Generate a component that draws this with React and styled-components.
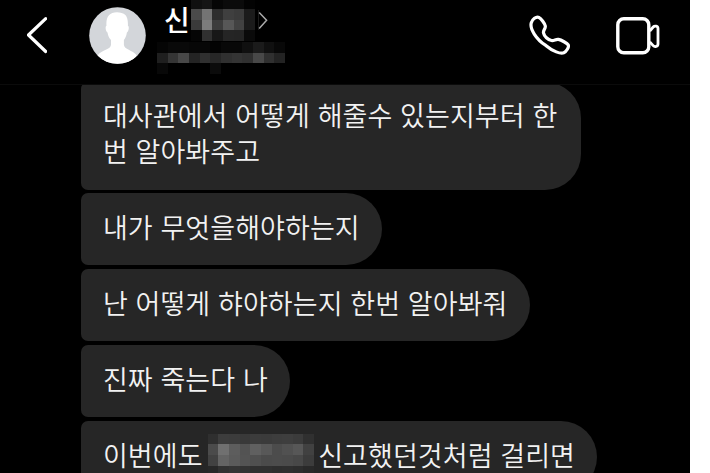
import React from "react";
import styled, { createGlobalStyle } from "styled-components";

const headMask = [
  ["#101010", "#151515", "#060606", "#0b0b0b", "#0b0b0b", "#030303"],
  ["#4a4a4a", "#747474", "#2d2d2d", "#3f3f3f", "#3b3b3b", "#1b1b1b"],
  ["#3a3a3a", "#7c7c7c", "#3c3c3c", "#575757", "#424242", "#1b1b1b"],
  ["#050505", "#303030", "#171717", "#252525", "#242424", "#0a0a0a"],
];

const subMask = [
  ["#050505", "#090909", "#090909", "#070707", "#070707", "#030303", "#080808", "#080808", "#101010", "#1b1b1b", "#101010", "#080808"],
  ["#1f1f1f", "#353535", "#484848", "#242424", "#303030", "#272727", "#303030", "#343434", "#303030", "#484848", "#303030", "#232323"],
  ["#080808", "#000", "#000", "#000", "#000", "#0b0b0b", "#000", "#000", "#000", "#000", "#000", "#000"],
];

const messageMask = [
  ["#2f2f2f", "#3d3d3d", "#3c3c3c", "#393939", "#3c3c3c", "#3b3b3b", "#3d3d3d", "#3e3e3e", "#3b3b3b", "#303030"],
  ["#4b4b4b", "#707070", "#5d5d5d", "#535353", "#606060", "#585858", "#4c4c4c", "#515151", "#575757", "#414141"],
  ["#424242", "#646464", "#5b5b5b", "#545454", "#505050", "#4b4b4b", "#4c4c4c", "#4b4b4b", "#484848", "#3c3c3c"],
  ["#282828", "#323232", "#353535", "#333333", "#303030", "#303030", "#2e2e2e", "#2f2f2f", "#2d2d2d", "#292929"],
];

const messages = [
  { id: 1, width: 500, lines: ["대사관에서 어떻게 해줄수 있는지부터 한", "번 알아봐주고"] },
  { id: 2, width: 301, lines: ["내가 무엇을해야하는지"] },
  { id: 3, width: 449, lines: ["난 어떻게 햐야하는지 한번 알아봐줘"] },
  { id: 4, width: 209, lines: ["진짜 죽는다 나"] },
];

const Mosaic = ({ rows, className }) => (
  <MosaicGrid className={className} $cols={rows[0].length}>
    {rows.map((row, y) => row.map((color, x) => (
      <MosaicCell key={`${y}-${x}`} $color={color} />
    )))}
  </MosaicGrid>
);

const BackIcon = () => (
  <svg width="20" height="37" viewBox="0 0 20 37" fill="none" stroke="#fff" strokeWidth="3.2" strokeLinecap="round" strokeLinejoin="round">
    <path d="M18.7 1.7 1.5 18 18.7 34.5" />
  </svg>
);

const Avatar = () => (
  <svg width="57" height="57" viewBox="0 0 57 57">
    <defs>
      <clipPath id="avatar"><circle cx="28.5" cy="28.5" r="28.3" /></clipPath>
    </defs>
    <g clipPath="url(#avatar)">
      <rect width="57" height="57" fill="#d3d6da" />
      <path
        fill="#fff"
        d="M28 5.2c3 0 5.2 1 6.2 1.4 3.8 1.5 5 6.4 4.7 12.2 1.5.6 1 5-1 6.7-.5 3.6-1.8 6-3 7.6v4.6c0 4.8 9 5.4 12.6 10.3V60H9V48c3.5-5 13-5.5 13-10.3v-4.6c-1.9-2-3-4.5-3.5-7.6-2-1.7-2.5-6.1-1-6.7C16.7 10.2 20 5.2 28 5.2Z"
      />
    </g>
  </svg>
);

const NameArrow = () => (
  <svg width="12" height="20" viewBox="0 0 12 20" fill="none" stroke="#aaa" strokeWidth="1.5">
    <path d="M.5 0v20" stroke="#1c1c1c" strokeWidth="1" />
    <path d="m1.2 2.5 7.4 7.7-7.4 8.2" />
  </svg>
);

const PhoneIcon = () => (
  <svg width="42" height="42" viewBox="0 0 42 42" fill="none" stroke="#fff" strokeWidth="3.2" strokeLinejoin="round">
    <path d="M2.3 7.8C3.4 4.2 7 1.2 10 2.4c2 .8 6 6.6 6.3 8.5.5 2.8-2.4 4.2-1.8 7 .7 3.5 4.4 6.9 8 7.6 2.4.5 4.6-1.6 6.9-1.1 3 .6 8.8 3.8 9.8 5.5 1.2 2.1-2 6.9-4.4 7.9-3.3 1.4-10.8-1.4-18-7.4C7.2 24.4.5 13.6 2.3 7.8Z" />
  </svg>
);

const VideoIcon = () => (
  <svg width="46" height="38" viewBox="0 0 46 38" fill="none" stroke="#fff" strokeWidth="3.4" strokeLinejoin="round">
    <rect x="2.8" y="1.8" width="31" height="34" rx="6" />
    <path strokeWidth="2.8" d="m34.8 14 3.4-4c1.4-1.6 4.8-1.1 4.8 1.6v15.4c0 2.7-3.4 3.2-4.8 1.6l-3.4-3.6" />
  </svg>
);

export default function App() {
  return (
    <>
      <GlobalStyle />
      <Page>
        <Phone>
          <Header>
            <BackButton aria-label="뒤로"><BackIcon /></BackButton>
            <Avatar />
            <Profile>
              <NameRow>
                <Name>신</Name>
                <NameMosaic rows={headMask} />
                <NameArrow />
              </NameRow>
              <Mosaic rows={subMask} />
            </Profile>
            <Actions>
              <IconButton aria-label="음성 통화"><PhoneIcon /></IconButton>
              <IconButton aria-label="영상 통화"><VideoIcon /></IconButton>
            </Actions>
          </Header>
          <Chat>
            <Thread>
              {messages.map(({ id, width, lines }) => (
                <Bubble key={id} $width={width} $multiline={lines.length > 1}>
                  {lines.map(line => <Line key={line}>{line}</Line>)}
                </Bubble>
              ))}
              <Bubble $width={516}>
                <MaskedLine>
                  <span>이번에도</span>
                  <MessageMosaic rows={messageMask} />
                  <span>신고했던것처럼 걸리면</span>
                </MaskedLine>
              </Bubble>
            </Thread>
          </Chat>
        </Phone>
      </Page>
    </>
  );
}

const GlobalStyle = createGlobalStyle`
  * {
    box-sizing: border-box;
  }
  body {
    margin: 0;
    background: #fff;
  }
`;

const Page = styled.div`
  width: 710px;
  height: 473px;
  overflow: hidden;
  background: #fff;
  font-family: "Noto Sans CJK KR", sans-serif;
`;

const Phone = styled.div`
  display: flex;
  flex-direction: column;
  width: 690px;
  height: 473px;
  background: #000;
`;

const Header = styled.header`
  display: flex;
  flex: none;
  align-items: flex-start;
  height: 85px;
  border-bottom: 1px solid #0b0b0b;

  svg {
    display: block;
    flex: none;
  }
  > svg {
    margin-top: 7px;
  }
`;

const BackButton = styled.button`
  width: 89px;
  padding: 17px 0 0 27px;
  border: 0;
  background: none;
`;

const Profile = styled.div`
  padding-left: 11px;
`;

const NameRow = styled.div`
  display: flex;
  height: 42px;
  padding-left: 7px;

  svg {
    margin: 10px 0 0 3px;
  }
`;

const Name = styled.div`
  width: 27px;
  color: #fff;
  font-size: 28px;
  font-weight: 500;
  line-height: 39px;
`;

const MosaicGrid = styled.div`
  display: grid;
  grid-template-columns: repeat(${({ $cols }) => $cols}, 10.67px);
  grid-auto-rows: 10.67px;
`;

const MosaicCell = styled.div`
  background: ${({ $color }) => $color};
`;

const NameMosaic = styled(Mosaic)`
  height: 42px;
  margin-top: -1.5px;
`;

const Actions = styled.div`
  display: flex;
  gap: 44px;
  margin-left: auto;
  padding: 15px 29px 0 0;
`;

const IconButton = styled.button`
  padding: 0;
  border: 0;
  background: none;
`;

const Chat = styled.main`
  flex: 1;
  min-height: 0;
  overflow: hidden;
`;

const Thread = styled.div`
  display: flex;
  flex-direction: column;
  align-items: flex-start;
  gap: 3.8px;
  margin-top: -3.5px;
  padding-left: 81.4px;
`;

const Bubble = styled.div`
  flex: none;
  width: ${({ $width }) => $width}px;
  padding: ${({ $multiline }) => ($multiline ? "15.5px 0 20.5px" : "16px 0 20px")} 21.5px;
  border-radius: 7px 36px 36px 7px;
  background: #262626;
  color: #f2f2f2;
  font-size: 27px;
  font-weight: 350;
  line-height: 36px;
  letter-spacing: 0.08px;
  word-spacing: 1.6px;
  white-space: nowrap;
`;

const Line = styled.div`
  height: 36px;
`;

const MaskedLine = styled(Line)`
  display: flex;
`;

const MessageMosaic = styled(Mosaic)`
  height: 36px;
  margin: -3px 4px 0 5px;
`;
